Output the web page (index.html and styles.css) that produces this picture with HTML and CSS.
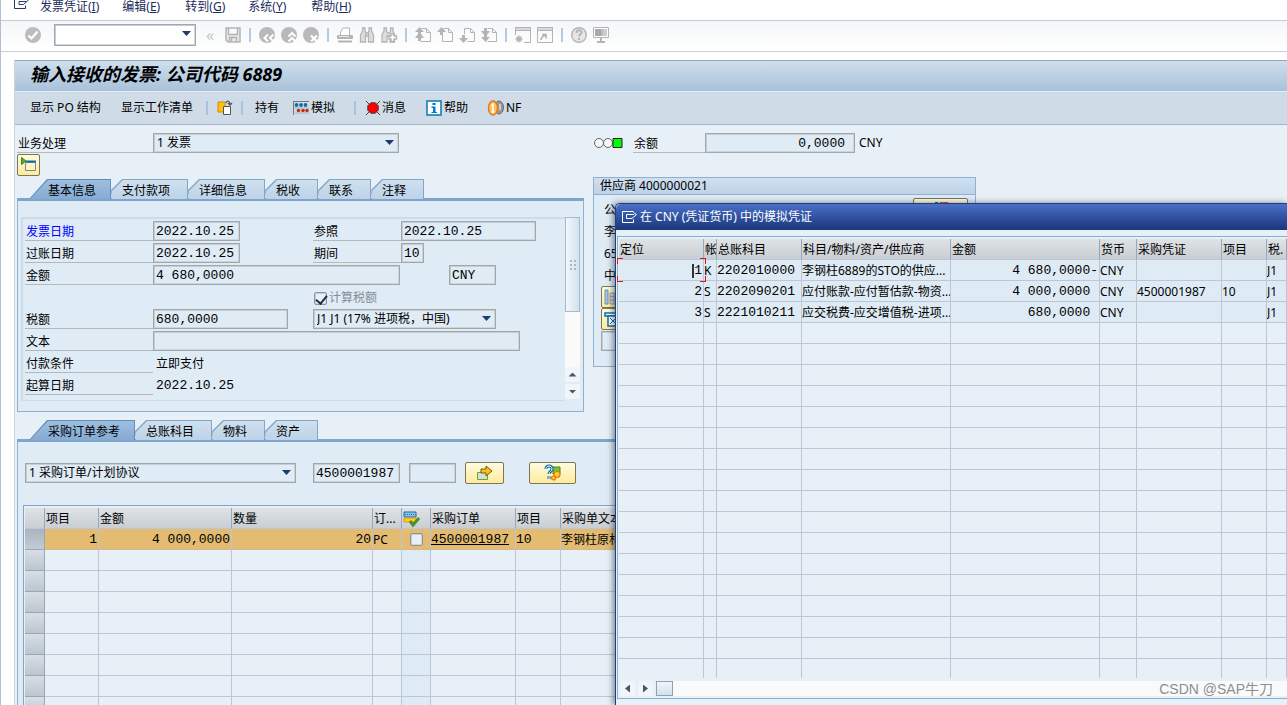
FILE: index.html
```html
<!DOCTYPE html>
<html lang="zh-CN">
<head>
<meta charset="utf-8">
<title>输入接收的发票</title>
<link rel="stylesheet" href="styles.css">
</head>
<body>
<div class="app">
  <nav class="menubar">
    <svg class="exit-icon" width="16" height="12" viewBox="0 0 16 12" fill="none" stroke="#24386c"><path d="M8 -2.500H.5v11h11V5.500M5 1.500h7M5 1.500v3h4.500l5-4.500-3-2.500"/></svg>
    <button class="menu-item">发票凭证(<u>I</u>)</button>
    <button class="menu-item">编辑(<u>E</u>)</button>
    <button class="menu-item">转到(<u>G</u>)</button>
    <button class="menu-item">系统(<u>Y</u>)</button>
    <button class="menu-item">帮助(<u>H</u>)</button>
  </nav>

  <div class="toolbar">
    <button class="tool" aria-label="确认"><svg width="16" height="16" viewBox="0 0 16 16"><circle cx="8" cy="8" r="8" fill="#bcbcbc"/><path d="M3.500 8.500l3 3 6-7" fill="none" stroke="#fff" stroke-width="2.200"/></svg></button>
    <span class="select command"><select aria-label="命令"><option></option></select></span>
    <span class="collapse">«</span>
    <button class="tool" aria-label="保存"><svg width="16" height="16" viewBox="0 0 16 16" fill="none" stroke="#b4b4b4" stroke-width="1.500"><path d="M1 1h14v14H3L1 13zM3.500 1v6.500h9V1M4.500 15v-4.500h7V15" fill="#e9e9e9"/><path d="M6.500 11v3"/></svg></button>
    <i class="sep"></i>
    <button class="tool" aria-label="返回"><svg width="16" height="16" viewBox="0 0 16 16"><circle cx="8" cy="8" r="8" fill="#b9b9b9"/><path d="M9 7.500L5.500 11 9 14.500M14.500 7.500L11 11l3.500 3.500" fill="none" stroke="#fff" stroke-width="2"/></svg></button>
    <button class="tool" aria-label="退出"><svg width="16" height="16" viewBox="0 0 16 16"><circle cx="8" cy="8" r="8" fill="#b9b9b9"/><path d="M7.500 9.500L11 6l3.500 3.500M7.500 14.500L11 11l3.500 3.500" fill="none" stroke="#fff" stroke-width="2"/></svg></button>
    <button class="tool" aria-label="取消"><svg width="16" height="16" viewBox="0 0 16 16"><circle cx="8" cy="8" r="8" fill="#b9b9b9"/><path d="M8 8.500l6 6M14 8.500l-6 6" fill="none" stroke="#fff" stroke-width="2.200"/></svg></button>
    <i class="sep"></i>
    <button class="tool" aria-label="打印"><svg width="16" height="16" viewBox="0 0 16 16"><path d="M3.500 8V5L6 1h6.500v7" fill="#fff" stroke="#b4b4b4"/><rect y="8" width="16" height="4" rx="1" fill="#b4b4b4"/><path d="M2 9.500h10" stroke="#e8e8e8"/><path d="M1 14.500h14" stroke="#b4b4b4" stroke-width="2"/></svg></button>
    <button class="tool" aria-label="查找"><svg width="16" height="16" viewBox="0 0 16 16" fill="#dedede" stroke="#b4b4b4" stroke-width="1.300"><path d="M3.500 1h2.500v3l1 2h2l1-2V1h2.500v3L14.500 8v7h-5V9h-3v6h-5V8l2-4z"/><path d="M6.500 6v3M9.500 6v3"/></svg></button>
    <button class="tool" aria-label="查找下一个"><svg width="16" height="16" viewBox="0 0 16 16" fill="#dedede" stroke="#b4b4b4" stroke-width="1.300"><path d="M3 1h2.500v3l1 2h2l1-2V1h2.500v3L13.500 8v7H9V9H6v6H1V8l2-4z"/><path d="M10 7h3v2h2.500v3H13v2.500h-3V12H8V9h2z" fill="#fff"/></svg></button>
    <i class="sep"></i>
    <button class="tool" aria-label="首页"><svg width="16" height="16" viewBox="0 0 16 16"><path d="M6.500 1.500h5l4 4v9h-10M11.500 1.500v4h4" fill="none" stroke="#b4b4b4"/><path d="M4.500 0L9 5H6v2L9 11H6v3H3v-3H0l3-4V5H0z" fill="#b4b4b4"/></svg></button>
    <button class="tool" aria-label="上一页"><svg width="16" height="16" viewBox="0 0 16 16"><path d="M6.500 1.500h5l4 4v9h-10V8M11.500 1.500v4h4" fill="none" stroke="#b4b4b4"/><path d="M4.500 0L9 5H6v3H3V5H0z" fill="#b4b4b4"/></svg></button>
    <button class="tool" aria-label="下一页"><svg width="16" height="16" viewBox="0 0 16 16"><path d="M5.500 7V1.500h6l4 4v9h-7M11.500 1.500v4h4" fill="none" stroke="#b4b4b4"/><path d="M4.500 16L9 11H6V8H3v3H0z" fill="#b4b4b4"/></svg></button>
    <button class="tool" aria-label="末页"><svg width="16" height="16" viewBox="0 0 16 16"><path d="M6.500 1.500h5l4 4v9h-9M11.500 1.500v4h4" fill="none" stroke="#b4b4b4"/><path d="M3 1h3v3h3L6 8v2h3l-4.500 5L0 10h3V8L0 4h3z" fill="#b4b4b4"/></svg></button>
    <i class="sep"></i>
    <button class="tool" aria-label="新建会话"><svg width="16" height="16" viewBox="0 0 16 16" fill="none" stroke="#b4b4b4"><path d="M.5 8V.5h15v15H9"/><path d="M0 2h16" stroke-width="4"/><path d="M1 2h14" stroke="#e4e4e4" stroke-width="1.500"/><path d="M4 8.500v7M.5 12h7M1.500 9.500l5 5M6.500 9.500l-5 5" stroke-width="1.300"/></svg></button>
    <button class="tool" aria-label="快捷方式"><svg width="16" height="16" viewBox="0 0 16 16" fill="none" stroke="#b4b4b4"><path d="M.5 .5h15v15H.5z"/><path d="M0 2h16" stroke-width="4"/><path d="M1 2h14" stroke="#e4e4e4" stroke-width="1.500"/><path d="M4 13c0-3 2-4 5-5M5 7.500h4v4" stroke-width="1.600"/></svg></button>
    <i class="sep"></i>
    <button class="tool" aria-label="帮助"><svg width="16" height="16" viewBox="0 0 16 16" fill="none" stroke="#b4b4b4"><circle cx="8" cy="8" r="7.300" fill="#e6e6e6" stroke-width="1.400"/><path d="M5.500 6c0-3.500 5-3.500 5-.5C10.500 7.500 8 7.500 8 9.500M8 11v2" stroke-width="2"/></svg></button>
    <button class="tool" aria-label="布局"><svg width="16" height="16" viewBox="0 0 16 16"><path d="M.5 .5h15v10H.5z" fill="#fff" stroke="#b4b4b4"/><path d="M2 2h6v7H2z" fill="#a8a8a8"/><path d="M8 2h2v7H8z" fill="#bbb"/><path d="M10 2h4v7h-4z" fill="#cdcdcd"/><path d="M7 11h2v3H7zM4 14h8v2H4z" fill="#b4b4b4"/></svg></button>
  </div>

  <main class="screen">
    <header class="title"><h1>输入接收的发票: 公司代码 6889</h1></header>
    <div class="appbar">
      <button class="action po">显示 PO 结构</button>
      <button class="action list">显示工作清单</button>
      <i class="sep"></i>
      <button class="action" aria-label="其他发票凭证"><svg width="16" height="16" viewBox="0 0 16 16"><path d="M1 2h7v10H1z" fill="#ffc010" stroke="#d88400"/><path d="M6.500 6.500h7v8h-7z" fill="#fff" stroke="#555"/><path d="M9 3c1-3 4-2 4 1M11 3l2 2 2-2" fill="none" stroke="#555" stroke-width="1.300"/></svg></button>
      <i class="sep"></i>
      <button class="action hold">持有</button>
      <button class="action"><svg width="16" height="16" viewBox="0 0 16 16"><path d="M.5 15V1M0 1.500h16" fill="none" stroke="#777"/><g fill="#0870b0"><circle cx="3.500" cy="5" r="1.900"/><circle cx="8" cy="5" r="1.900"/><circle cx="12.500" cy="5" r="1.900"/></g><g fill="#c03018"><circle cx="5.500" cy="10.500" r="1.800"/><circle cx="10" cy="10.500" r="1.800"/><circle cx="14" cy="10.500" r="1.800"/></g><path d="M0 8h16M2 13h14" stroke="#999" stroke-width=".6"/></svg>模拟</button>
      <i class="sep wide"></i>
      <button class="action"><svg width="14" height="14" viewBox="0 0 16 16"><path d="M0 0l4 4M16 0l-4 4M0 16l4-4M16 16l-4-4" stroke="#333"/><path d="M5.500 2h5L14 5.500v5L10.500 14h-5L2 10.500v-5z" fill="#f00" stroke="#333"/></svg>消息</button>
      <button class="action help"><svg width="16" height="16" viewBox="0 0 16 16"><path d="M1 1h14v14H1z" fill="#fff" stroke="#0878b8" stroke-width="1.500"/><path d="M6.500 3h3v2h-3zM5.500 6.500h4V12h1.500v1H5.500v-1H7V8H5.500z" fill="#0878b8"/></svg>帮助</button>
      <button class="action nf"><svg width="16" height="16" viewBox="0 0 16 16"><ellipse cx="11" cy="7.500" rx="4.500" ry="6.500" fill="#999" stroke="#666"/><path d="M12 4v6" stroke="#fff"/><ellipse cx="5" cy="8" rx="4.500" ry="7" fill="#f9c36a" stroke="#e8780a" stroke-width="1.400"/><path d="M3.500 6L5 4.500v7M3.500 12h3" fill="none" stroke="#fff" stroke-width="1.400"/></svg>NF</button>
    </div>

    <div class="content">
      <div class="topline">
        <label class="lbl" for="proc">业务处理</label>
        <span class="select w-proc"><select id="proc"><option>1 发票</option></select></span>
        <svg class="lights" width="29" height="12" viewBox="0 0 29 12"><g fill="#f4f6f8" stroke="#666"><circle cx="5" cy="6" r="4.500"/><circle cx="14" cy="6" r="4.500"/></g><path d="M19 1.500h9v9h-9z" fill="#0f0" stroke="#222"/></svg>
        <label class="lbl balance" for="bal">余额</label>
        <input class="w-bal right" id="bal" value="0,0000" readonly>
        <span class="unit">CNY</span>
      </div>
      <button class="ybtn small" aria-label="显示抬头"><svg width="18" height="18" viewBox="0 0 18 18"><path d="M1.500 1.500v7L6 5z" fill="#5cae28" stroke="#3b8318"/><path d="M5.500 6.500h10v8h-10z" fill="#fdf4c0" stroke="#7c8790"/><path d="M6 5.500h10" stroke="#0870b0" stroke-width="2"/></svg></button>

      <div class="upper">
        <section class="header-data">
          <div class="tabs">
            <button class="tab active t-82"><span>基本信息</span></button>
            <button class="tab t-77"><span>支付款项</span></button>
            <button class="tab t-77"><span>详细信息</span></button>
            <button class="tab t-53"><span>税收</span></button>
            <button class="tab t-53"><span>联系</span></button>
            <button class="tab t-53"><span>注释</span></button>
          </div>
          <div class="panel">
            <form class="fields">
              <div class="row"><label class="lbl blue" for="f1">发票日期</label><input class="w-date" id="f1" value="2022.10.25"><label class="lbl second" for="f2">参照</label><input class="w-ref" id="f2" value="2022.10.25"></div>
              <div class="row"><label class="lbl" for="f3">过账日期</label><input class="w-date" id="f3" value="2022.10.25"><label class="lbl second" for="f4">期间</label><input class="w-period" id="f4" value="10"></div>
              <div class="row"><label class="lbl" for="f5">金额</label><input class="w-amount" id="f5" value="4 680,0000"><input class="w-cur" aria-label="货币" value="CNY"></div>
              <div class="row check"><input type="checkbox" id="f6" checked><label for="f6">计算税额</label></div>
              <div class="row"><label class="lbl" for="f7">税额</label><input class="w-ref" id="f7" value="680,0000"><span class="select w-tax"><select aria-label="税码"><option>J1 J1 (17% 进项税，中国)</option></select></span></div>
              <div class="row"><label class="lbl" for="f8">文本</label><input class="w-text" id="f8" value=""></div>
              <div class="row"><span class="lbl">付款条件</span><span class="value">立即支付</span></div>
              <div class="row"><span class="lbl">起算日期</span><span class="value mono">2022.10.25</span></div>
            </form>
            <div class="vscroll">
              <div class="thumb"><svg width="6" height="10" viewBox="0 0 6 10" fill="#aab8c6"><path d="M0 0h2v2H0zM4 0h2v2H4zM0 4h2v2H0zM4 4h2v2H4zM0 8h2v2H0zM4 8h2v2H4z"/></svg></div>
              <div class="track"></div>
              <button class="arrow" aria-label="向上"><i class="up"></i></button>
              <button class="arrow" aria-label="向下"><i class="down"></i></button>
            </div>
          </div>
        </section>

        <section class="vendor">
          <h2>供应商 4000000021</h2>
          <div class="vendor-body">
            <div class="vendor-lines">
              <p>公</p><p>李</p><p>65</p><p>中</p>
              <button class="ybtn stack" aria-label="电话"><svg width="18" height="16" viewBox="0 0 18 16"><path d="M1 1h3v14H1z" fill="#a9c8dc" stroke="#6c93ae"/><path d="M6 4h11v11H6z" fill="#d5d8da" stroke="#999"/><path d="M6 7.500h11M6 11h11M10 4v11" stroke="#999"/></svg></button>
              <button class="ybtn stack" aria-label="银行"><svg width="18" height="16" viewBox="0 0 18 16"><path d="M1 2h14v3H1z" fill="#fff" stroke="#0870b0" stroke-width="1.500"/><path d="M4 5h10v10H4z" fill="#fff" stroke="#0870b0" stroke-width="1.500"/><path d="M6 7l6 6M12 7l-6 6" stroke="#0870b0"/></svg></button>
              <input aria-label="附加" class="stack-input" value="">
            </div>
            <button class="ybtn vendor-btn" aria-label="供应商明细"><svg width="18" height="16" viewBox="0 0 18 16"><path d="M3 1h3v8H3z" fill="#0870b0"/><path d="M8 1.500h8v8H8z" fill="#fc3" stroke="#e0571a"/></svg></button>
          </div>
        </section>
      </div>

      <section class="items">
        <div class="tabs">
          <button class="tab active t-106"><span>采购订单参考</span></button>
          <button class="tab t-77"><span>总账科目</span></button>
          <button class="tab t-53"><span>物料</span></button>
          <button class="tab t-53"><span>资产</span></button>
        </div>
        <div class="items-panel">
          <div class="picker">
            <span class="select w-type"><select aria-label="参考类型"><option>1 采购订单/计划协议</option></select></span>
            <input class="w-po" aria-label="采购订单" value="4500001987">
            <input class="w-item" aria-label="项目" value="">
            <button class="ybtn go" aria-label="转到"><svg width="18" height="16" viewBox="0 0 18 16"><path d="M1.500 7.500h10v7h-10z" fill="#d9dfd6" stroke="#5cae28"/><path d="M5 4h5V1l6 5-6 5V8H5z" fill="#ffc010" stroke="#6d5a20"/></svg></button>
            <button class="ybtn quest" aria-label="供应商查询"><svg width="18" height="16" viewBox="0 0 18 16"><path d="M9 2h7v7H9z" fill="#7abf34" stroke="#3f8f23"/><path d="M2 4c0-4 6-4 6 0 0 2.500-3 2.500-3 5M5 11v3" fill="none" stroke="#0870b0" stroke-width="3"/><path d="M2 4c0-4 6-4 6 0 0 2.500-3 2.500-3 5M5 11v3" fill="none" stroke="#fff"/><circle cx="13" cy="9.500" r="3" fill="#fc3" stroke="#e8780a" stroke-width="1.200"/><circle cx="9.500" cy="13" r="2" fill="#fc3" stroke="#e8780a" stroke-width="1.200"/></svg></button>
          </div>
          <div class="grid-frame">
            <table class="grid po-grid">
              <colgroup><col class="c20"><col class="c54"><col class="c133"><col class="c141"><col class="c29"><col class="c29"><col class="c85"><col class="c45"><col></colgroup>
              <thead><tr><th></th><th>项目</th><th>金额</th><th>数量</th><th>订...</th><th class="icon-cell"><svg width="18" height="16" viewBox="0 0 18 16"><path d="M1 1h12v5H1z" fill="#8cc4e8" stroke="#0870b0"/><path d="M2 3.500h10" stroke="#0870b0" stroke-dasharray="1 1"/><path d="M1 7h12v4H1z" fill="#fc2" stroke="#e8980a"/><path d="M7 10l3 4 6-7" fill="none" stroke="#4a9030" stroke-width="3"/></svg></th><th>采购订单</th><th>项目</th><th>采购单文本</th></tr></thead>
              <tbody>
                <tr class="selected"><td class="sel"></td><td class="num">1</td><td class="num">4 000,0000</td><td class="num">20</td><td>PC</td><td class="tick"><input type="checkbox" aria-label="标记"></td><td class="mono"><a href="#">4500001987</a></td><td class="mono">10</td><td>李钢柱原材料</td></tr>
                <tr><td class="sel"></td><td></td><td></td><td></td><td></td><td class="tick"></td><td></td><td></td><td></td></tr>
                <tr><td class="sel"></td><td></td><td></td><td></td><td></td><td class="tick"></td><td></td><td></td><td></td></tr>
                <tr><td class="sel"></td><td></td><td></td><td></td><td></td><td class="tick"></td><td></td><td></td><td></td></tr>
                <tr><td class="sel"></td><td></td><td></td><td></td><td></td><td class="tick"></td><td></td><td></td><td></td></tr>
                <tr><td class="sel"></td><td></td><td></td><td></td><td></td><td class="tick"></td><td></td><td></td><td></td></tr>
                <tr><td class="sel"></td><td></td><td></td><td></td><td></td><td class="tick"></td><td></td><td></td><td></td></tr>
                <tr><td class="sel"></td><td></td><td></td><td></td><td></td><td class="tick"></td><td></td><td></td><td></td></tr>
                <tr><td class="sel"></td><td></td><td></td><td></td><td></td><td class="tick"></td><td></td><td></td><td></td></tr>
              </tbody>
            </table>
          </div>
        </div>
      </section>
    </div>
  </main>
</div>

<div class="dialog" role="dialog" aria-labelledby="dlg-title">
  <div class="dialog-title">
    <svg width="16" height="14" viewBox="0 0 16 14" fill="none" stroke="#fff"><path d="M11.500 1.500h-11v11h11V9.500M4.500 4.500H12M4.500 4.500v4H10l4.500-4-3-2"/></svg>
    <span id="dlg-title">在 CNY (凭证货币) 中的模拟凭证</span>
  </div>
  <div class="dialog-body">
    <div class="dialog-table">
      <table class="grid sim-grid">
        <colgroup><col class="c85"><col class="c13"><col class="c85"><col class="c149"><col class="c149"><col class="c37"><col class="c85"><col class="c45"><col></colgroup>
        <thead><tr><th>定位</th><th class="tight">帐</th><th>总账科目</th><th>科目/物料/资产/供应商</th><th>金额</th><th>货币</th><th>采购凭证</th><th>项目</th><th>税.</th></tr></thead>
        <tbody>
          <tr class="filled"><td class="num focus"><i class="caret"></i>1<i class="brackets"></i></td><td>K</td><td class="mono">2202010000</td><td>李钢柱6889的STO的供应...</td><td class="num">4 680,0000-</td><td>CNY</td><td></td><td></td><td>J1</td></tr>
          <tr class="filled"><td class="num">2</td><td>S</td><td class="mono">2202090201</td><td>应付账款-应付暂估款-物资...</td><td class="num">4 000,0000 </td><td>CNY</td><td>4500001987</td><td>10</td><td>J1</td></tr>
          <tr class="filled"><td class="num">3</td><td>S</td><td class="mono">2221010211</td><td>应交税费-应交增值税-进项...</td><td class="num">680,0000 </td><td>CNY</td><td></td><td></td><td>J1</td></tr>
          <tr><td></td><td></td><td></td><td></td><td></td><td></td><td></td><td></td><td></td></tr>
          <tr><td></td><td></td><td></td><td></td><td></td><td></td><td></td><td></td><td></td></tr>
          <tr><td></td><td></td><td></td><td></td><td></td><td></td><td></td><td></td><td></td></tr>
          <tr><td></td><td></td><td></td><td></td><td></td><td></td><td></td><td></td><td></td></tr>
          <tr><td></td><td></td><td></td><td></td><td></td><td></td><td></td><td></td><td></td></tr>
          <tr><td></td><td></td><td></td><td></td><td></td><td></td><td></td><td></td><td></td></tr>
          <tr><td></td><td></td><td></td><td></td><td></td><td></td><td></td><td></td><td></td></tr>
          <tr><td></td><td></td><td></td><td></td><td></td><td></td><td></td><td></td><td></td></tr>
          <tr><td></td><td></td><td></td><td></td><td></td><td></td><td></td><td></td><td></td></tr>
          <tr><td></td><td></td><td></td><td></td><td></td><td></td><td></td><td></td><td></td></tr>
          <tr><td></td><td></td><td></td><td></td><td></td><td></td><td></td><td></td><td></td></tr>
          <tr><td></td><td></td><td></td><td></td><td></td><td></td><td></td><td></td><td></td></tr>
          <tr><td></td><td></td><td></td><td></td><td></td><td></td><td></td><td></td><td></td></tr>
          <tr><td></td><td></td><td></td><td></td><td></td><td></td><td></td><td></td><td></td></tr>
          <tr><td></td><td></td><td></td><td></td><td></td><td></td><td></td><td></td><td></td></tr>
          <tr><td></td><td></td><td></td><td></td><td></td><td></td><td></td><td></td><td></td></tr>
          <tr class="last"><td></td><td></td><td></td><td></td><td></td><td></td><td></td><td></td><td></td></tr>
        </tbody>
      </table>
      <div class="hscroll">
        <button class="arrow" aria-label="向左"><i class="left"></i></button>
        <button class="arrow" aria-label="向右"><i class="rightward"></i></button>
        <div class="htrack"><div class="hthumb"></div></div>
      </div>
    </div>
  </div>
</div>
<div class="watermark">CSDN @SAP牛刀</div>
</body>
</html>
```
FILE: styles.css
```css
* { box-sizing: border-box; }

body {
  margin: 0;
  height: 100vh;
  overflow: hidden;
  background: #fff;
  color: #000;
  font: 12px/16px "Noto Sans", "Noto Sans CJK SC", sans-serif;
}

button, input, select { font: inherit; color: inherit; }
button { border: 0; padding: 0; background: none; white-space: nowrap; }
svg { flex: none; display: block; overflow: visible; }
h1, h2, p { margin: 0; }

.app {
  display: flex;
  flex-direction: column;
  height: 100vh;
  border-left: 1px solid #b3bfd0;
}

/* menu bar */
.menubar {
  display: flex;
  align-items: flex-start;
  gap: 23px;
  height: 21px;
  flex: none;
  padding-left: 13px;
  border-bottom: 1px solid #c5ccd8;
  color: #1c2b5a;
}
.exit-icon { margin-right: -13px; }
.menu-item { min-width: 40px; line-height: 14px; text-align: left; }

/* standard toolbar */
.toolbar {
  display: flex;
  align-items: center;
  height: 31px;
  flex: none;
  padding: 0 0 2px 21px;
  border-bottom: 1px solid #c9cdd4;
  background: linear-gradient(#f4f6f9, #fff);
}
.tool { margin: 0 3px; }
.toolbar .sep { width: 2px; height: 14px; margin: 0 5px; background: #b4cbe2; }
.collapse { width: 26px; padding-left: 10px; font-size: 16px; color: #c4c4c4; }
.command { width: 142px; margin-left: 10px; }
.toolbar .select select { height: 22px; background: #fff; }

/* drop-down lists */
.select { position: relative; display: block; flex: none; }
.select select {
  display: block;
  width: 100%;
  height: 20px;
  padding: 0 3px;
  appearance: none;
  border: 1px solid #a2a7aa;
  border-radius: 0;
  box-shadow: inset 1px 1px #c6ced5, inset -1px -1px #cdd5db;
  background: #dfebf5;
}
.select::after {
  content: "";
  position: absolute;
  right: 5px;
  top: 7px;
  width: 9px;
  height: 5px;
  background: #1f3a6c;
  clip-path: polygon(0 0, 100% 0, 50% 100%);
}

/* title and application bar */
.screen {
  display: flex;
  flex-direction: column;
  flex: 1;
  min-height: 0;
  margin-top: 8px;
  margin-left: 13px;
  border-left: 1px solid #ccd4de;
  background: #e8f0f7;
}
.title {
  height: 31px;
  flex: none;
  padding: 1px 0 0 15px;
  border-top: 1px solid #8da9c4;
  background: linear-gradient(#cfdfec, #a8c1da);
}
.title h1 { font-size: 18px; line-height: 24px; font-style: italic; font-weight: 700; }
.appbar {
  display: flex;
  align-items: center;
  height: 34px;
  flex: none;
  padding-left: 15px;
  border-top: 1px solid #e2ecf5;
  border-bottom: 1px solid #a5b7c8;
  background: #cfdce7;
}
.action { display: flex; align-items: center; gap: 2px; }
.action.list { margin: 0 13px 0 20px; }
.action.hold { margin-right: 14px; }
.action.help { margin: 0 20px; }
.appbar .sep { width: 2px; height: 14px; margin-right: 9px; background: #a9c3de; }
.appbar .sep + .action + .sep { margin: 0 12px 0 8px; }
.appbar .sep.wide { margin: 0 10px 0 19px; }

.content { display: flex; flex-direction: column; flex: 1; min-height: 0; padding: 8px 0 0 2px; }

/* fields */
.lbl {
  flex: none;
  width: 128px;
  height: 20px;
  padding: 3px 0 0 1px;
  white-space: nowrap;
  border-bottom: 1px solid #b5b9bc;
}
.blue { color: #00f; }
input {
  flex: none;
  height: 20px;
  padding: 0 2px;
  border: 1px solid #a2a7aa;
  border-radius: 0;
  box-shadow: inset 1px 1px #c6ced5, inset -1px -1px #cdd5db;
  background: #dfebf5;
  font: 13px/16px "Liberation Mono", "Noto Sans CJK SC", monospace;
}
.mono, .num { font: 13px/16px "Liberation Mono", "Noto Sans CJK SC", monospace; }
.right { text-align: right; padding-right: 9px; }
.topline { display: flex; align-items: center; height: 20px; flex: none; }
.topline .lbl { width: 136px; }
.w-proc { width: 246px; }
.lights { margin: 0 10px 0 195px; }
.topline .balance { width: 72px; }
.w-bal { width: 150px; }
.unit { margin-left: 4px; }

.ybtn {
  display: flex;
  align-items: center;
  justify-content: center;
  height: 22px;
  border: 1px solid #7d755a;
  border-radius: 2px;
  background: linear-gradient(#fffbe0, #fdeb9c);
}
.small { width: 23px; margin-top: 1px; flex: none; }

/* tabs */
.upper { display: flex; align-items: flex-start; flex: none; height: 235px; margin-top: 1px; }
.header-data { width: 567px; padding-top: 2px; flex: none; }
.tabs {
  display: flex;
  height: 22px;
  padding-left: 12px;
  align-items: flex-start;
}
.tab { position: relative; height: 20px; padding: 3px 0 0 11px; text-align: left; }
.tab span { position: relative; z-index: 1; }
.tab::before, .tab::after { content: ""; position: absolute; inset: 0; }
.tab::before { background: #84a6c6; clip-path: polygon(0 11px, 11px 0, 100% 0, 100% 100%, 1px 100%); }
.tab::after { inset: 1px 1px 0 1px; background: linear-gradient(#cfe0ef, #bdd3e8); clip-path: polygon(0 11px, 11px 0, 100% 0, 100% 100%, 0 100%); }
.tab.active { padding-left: 19px; }
.tab.active::before { background: #648cb6; clip-path: polygon(0 100%, 18px 0, 100% 0, 100% 100%); }
.tab.active::after { background: linear-gradient(#9dbfdf, #85abd4); clip-path: polygon(0 100%, 18px 0, 100% 0, 100% 100%); }
.t-53 { width: 53px; }
.t-77 { width: 77px; }
.t-82 { width: 82px; }
.t-106 { width: 106px; }

.panel {
  display: flex;
  margin-top: -3px;
  padding: 16px 3px 10px;
  border: 1px solid #8fb0ce;
  border-top: 3px solid #7fa5cc;
  background: #dfebf5;
}
.fields {
  flex: 1;
  height: 184px;
  padding: 2px 0 0 2px;
  border: 2px solid #cbdceb;
  border-right: 0;
  border-bottom-width: 1px;
}
.row { display: flex; height: 22px; }
.w-date { width: 87px; }
.lbl.second { width: 88px; margin-left: 73px; }
.w-ref { width: 135px; }
.w-period { width: 23px; }
.w-amount { width: 247px; }
.w-cur { width: 47px; margin-left: 49px; }
.w-tax { width: 183px; margin-left: 25px; }
.w-text { width: 367px; }
.check { align-items: center; gap: 2px; padding-left: 289px; color: #858e96; }
input[type="checkbox"] {
  position: relative;
  width: 13px;
  height: 13px;
  margin: 0;
  padding: 0;
  appearance: none;
  border: 1px solid #8d949a;
  border-radius: 2px;
  background: #e8f0f7;
}
input[type="checkbox"]:checked::after {
  content: "";
  position: absolute;
  left: 3px;
  top: 0;
  width: 5px;
  height: 9px;
  border: solid #1e2c4a;
  border-width: 0 2px 2px 0;
  transform: rotate(40deg);
}
.value { padding: 3px 0 0 3px; }

/* scroll bars */
.vscroll { display: flex; flex-direction: column; width: 15px; height: 184px; }
.thumb {
  display: flex;
  justify-content: center;
  align-items: center;
  height: 95px;
  border: 1px solid #a9b9c8;
  background: linear-gradient(90deg, #f2f7fb, #d3e0ec);
}
.track { flex: 1; background: #fafafa; }
.arrow { display: flex; align-items: center; justify-content: center; width: 15px; height: 15px; flex: none; background: #f1f5f9; }
.vscroll .arrow { margin-bottom: 2px; }
.arrow i { display: block; width: 8px; height: 4px; background: #48596a; }
.up { clip-path: polygon(0 100%, 50% 0, 100% 100%); }
.down { clip-path: polygon(0 0, 100% 0, 50% 100%); }
.arrow .left, .arrow .rightward { width: 5px; height: 8px; }
.left { clip-path: polygon(100% 0, 0 50%, 100% 100%); }
.rightward { clip-path: polygon(0 0, 100% 50%, 0 100%); }

/* vendor box */
.vendor { width: 383px; height: 190px; margin-left: 9px; flex: none; border: 1px solid #8fb0ce; background: #dfebf5; }
.vendor h2 {
  height: 17px;
  padding-left: 6px;
  font-size: 12px;
  line-height: 16px;
  font-weight: 400;
  border-bottom: 1px solid #8fb0ce;
  background: linear-gradient(#cfe0ef, #bdd3e8);
}
.vendor-body { display: flex; justify-content: space-between; padding: 3px 7px 0; }
.vendor-lines p { height: 22px; padding: 4px 0 0 3px; }
.stack { width: 40px; justify-content: flex-start; padding-left: 2px; }
.stack-input { display: block; width: 250px; margin-top: 1px; }
.vendor-btn { width: 55px; }

/* item section */
.items { display: flex; flex-direction: column; flex: 1; min-height: 0; padding-top: 8px; }
.items .tabs { flex: none; }
.items-panel {
  flex: 1;
  min-height: 0;
  margin-top: -3px;
  padding: 20px 0 0 5px;
  border-left: 1px solid #8fb0ce;
  border-top: 3px solid #7fa5cc;
  background: #dfebf5;
}
.picker { display: flex; align-items: center; height: 22px; padding-left: 2px; }
.w-type { width: 271px; }
.w-po { width: 87px; margin-left: 17px; }
.w-item { width: 47px; margin-left: 9px; }
.go { width: 39px; margin-left: 9px; }
.quest { width: 47px; margin-left: 25px; }

.grid-frame { margin-top: 21px; padding: 2px 0 0 1px; border: 1px solid #7fa5cc; border-right: 0; background: #e8f0f7; }
.grid { width: 100%; table-layout: fixed; border-collapse: separate; border-spacing: 0; }
.grid th, .grid td {
  height: 21px;
  padding: 1px 1px 0;
  overflow: hidden;
  white-space: pre;
  text-align: left;
  border-right: 1px solid #bcc6d6;
  border-bottom: 1px solid #bcc6d6;
}
.grid th {
  font-weight: 400;
  border-right-color: #92a9bf;
  background: linear-gradient(#dfe3e6, #c9ced3);
}
.grid td { padding: 1px 0 0; }
.grid .num { text-align: right; padding-right: 1px; }
.sel { background: linear-gradient(#d8dee4, #bcc6cf); }
.grid td.sel { border-color: #97a7b5; }
.tick { background: #deebf5; }
.grid .tick { text-align: center; }
.tick input { display: block; margin: 0 auto; }
.icon-cell svg { display: block; }
.selected td { background: #e3bc71; border-bottom-color: #d2b98b; }
.selected td.sel { background: linear-gradient(#a9b4be, #c3ccd4); }
.selected a { color: #000; }
.c13 { width: 13px; }
.c20 { width: 20px; }
.c29 { width: 29px; }
.c37 { width: 37px; }
.c45 { width: 45px; }
.c54 { width: 54px; }
.c85 { width: 85px; }
.c133 { width: 133px; }
.c141 { width: 141px; }
.c149 { width: 149px; }

/* simulation window */
.dialog {
  position: absolute;
  left: 615px;
  top: 203px;
  right: 0;
  bottom: 0;
  display: flex;
  flex-direction: column;
  border-left: 1px solid #1f3f7c;
  border-top: 1px solid #1f3f7c;
  border-top-left-radius: 5px;
  background: #e8f0f7;
  box-shadow: -2px 0 6px rgba(30, 40, 60, 0.55);
}
.dialog-title {
  display: flex;
  align-items: center;
  gap: 2px;
  height: 26px;
  flex: none;
  padding-left: 6px;
  color: #fff;
  border-top-left-radius: 5px;
  background: linear-gradient(#4a70c8, #2c4c9a 60%, #1c387a);
}
.dialog-body { flex: 1; min-height: 0; padding: 6px 0 6px 1px; }
.dialog-table { height: 100%; display: flex; flex-direction: column; padding: 2px 0 0 1px; border: 1px solid #8ab0d0; border-right: 0; }
.sim-grid th, .sim-grid td { padding-top: 2px; }
.filled td { background: #deebf5; }
.grid .tight { padding-right: 0; }
.last td { height: 19px; border-bottom: 0; }
.grid td.focus { position: relative; overflow: visible; }
.caret { display: inline-block; width: 2px; height: 14px; background: #333; vertical-align: middle; }
.brackets {
  position: absolute;
  inset: -2px -3px -2px -2px;
  background:
    linear-gradient(#e0121c, #e0121c) 0 0 / 6px 1px,
    linear-gradient(#e0121c, #e0121c) 0 0 / 1px 6px,
    linear-gradient(#e0121c, #e0121c) 100% 0 / 6px 1px,
    linear-gradient(#e0121c, #e0121c) 100% 0 / 1px 6px,
    linear-gradient(#e0121c, #e0121c) 0 100% / 6px 1px,
    linear-gradient(#e0121c, #e0121c) 0 100% / 1px 6px,
    linear-gradient(#e0121c, #e0121c) 100% 100% / 6px 1px,
    linear-gradient(#e0121c, #e0121c) 100% 100% / 1px 6px;
  background-repeat: no-repeat;
  z-index: 1;
}
.hscroll { display: flex; gap: 3px; margin-top: 3px; padding-left: 1px; }
.htrack { flex: 1; background: #fafafa; }
.hthumb { width: 17px; height: 15px; border: 1px solid #8fa2b5; background: linear-gradient(#f0f5fa, #d3e0ec); }
.watermark {
  position: absolute;
  right: 14px;
  bottom: 7px;
  color: #8c8f92;
  font: 14px/18px "Liberation Sans", "Noto Sans CJK SC", sans-serif;
}
```
